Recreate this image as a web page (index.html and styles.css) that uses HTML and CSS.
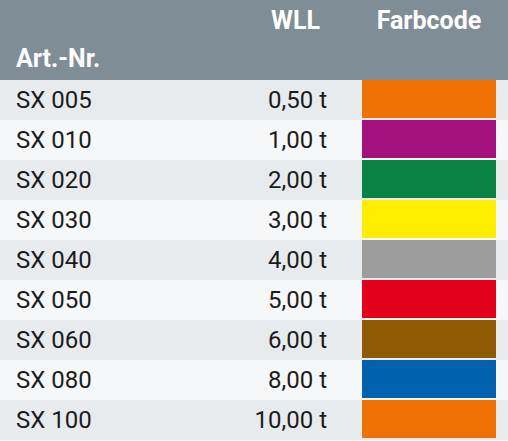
FILE: index.html
```html
<!DOCTYPE html>
<html lang="de">
<head>
<meta charset="utf-8">
<title>Farbcode</title>
<link rel="stylesheet" href="styles.css">
</head>
<body>
<div class="table">
  <div class="head">
    <div class="h-art">Art.-Nr.</div>
    <div class="h-wll">WLL</div>
    <div class="h-farb">Farbcode</div>
  </div>
  <div class="row odd"><div class="art">SX 005</div><div class="wll">0,50 t</div><div class="sw orange"></div></div>
  <div class="row even"><div class="art">SX 010</div><div class="wll">1,00 t</div><div class="sw purple"></div></div>
  <div class="row odd"><div class="art">SX 020</div><div class="wll">2,00 t</div><div class="sw green"></div></div>
  <div class="row even"><div class="art">SX 030</div><div class="wll">3,00 t</div><div class="sw yellow"></div></div>
  <div class="row odd"><div class="art">SX 040</div><div class="wll">4,00 t</div><div class="sw grey"></div></div>
  <div class="row even"><div class="art">SX 050</div><div class="wll">5,00 t</div><div class="sw red"></div></div>
  <div class="row odd"><div class="art">SX 060</div><div class="wll">6,00 t</div><div class="sw brown"></div></div>
  <div class="row even"><div class="art">SX 080</div><div class="wll">8,00 t</div><div class="sw blue"></div></div>
  <div class="row odd"><div class="art">SX 100</div><div class="wll">10,00 t</div><div class="sw orange"></div></div>
</div>
</body>
</html>
```
FILE: styles.css
```css
html, body {
  margin: 0;
  padding: 0;
  background: #f6f7f9;
}
body {
  font-family: Roboto, "Liberation Sans", sans-serif;
  color: #1b1b1b;
  width: 508px;
  height: 441px;
  overflow: hidden;
}
.table {
  display: flex;
  flex-direction: column;
}
.head {
  display: grid;
  grid-template-columns: 232px 130px 134px 12px;
  grid-template-rows: 40px 40px;
  background: #7e8d96;
  color: #ffffff;
  font-weight: bold;
  font-size: 25px;
}
.h-art {
  grid-column: 1;
  grid-row: 2;
  padding-left: 16px;
  line-height: 38px;
}
.h-wll {
  grid-column: 2;
  grid-row: 1;
  text-align: right;
  padding-right: 42px;
  line-height: 42px;
}
.h-farb {
  grid-column: 3;
  grid-row: 1;
  text-align: center;
  line-height: 42px;
}
.row {
  display: grid;
  grid-template-columns: 232px 130px 134px 12px;
  height: 40px;
  font-size: 24px;
  line-height: 40px;
}
.odd { background: #e8ebee; }
.even { background: #f6f7f9; }
.art {
  padding-left: 16px;
}
.wll {
  text-align: right;
  padding-right: 35px;
}
.sw {
  height: 38px;
}
.orange { background: #ee7203; }
.purple { background: #a3127f; }
.green { background: #0a8241; }
.yellow { background: #ffed00; }
.grey { background: #9d9d9d; }
.red { background: #e2001a; }
.brown { background: #8f5a03; }
.blue { background: #0062ae; }
```
